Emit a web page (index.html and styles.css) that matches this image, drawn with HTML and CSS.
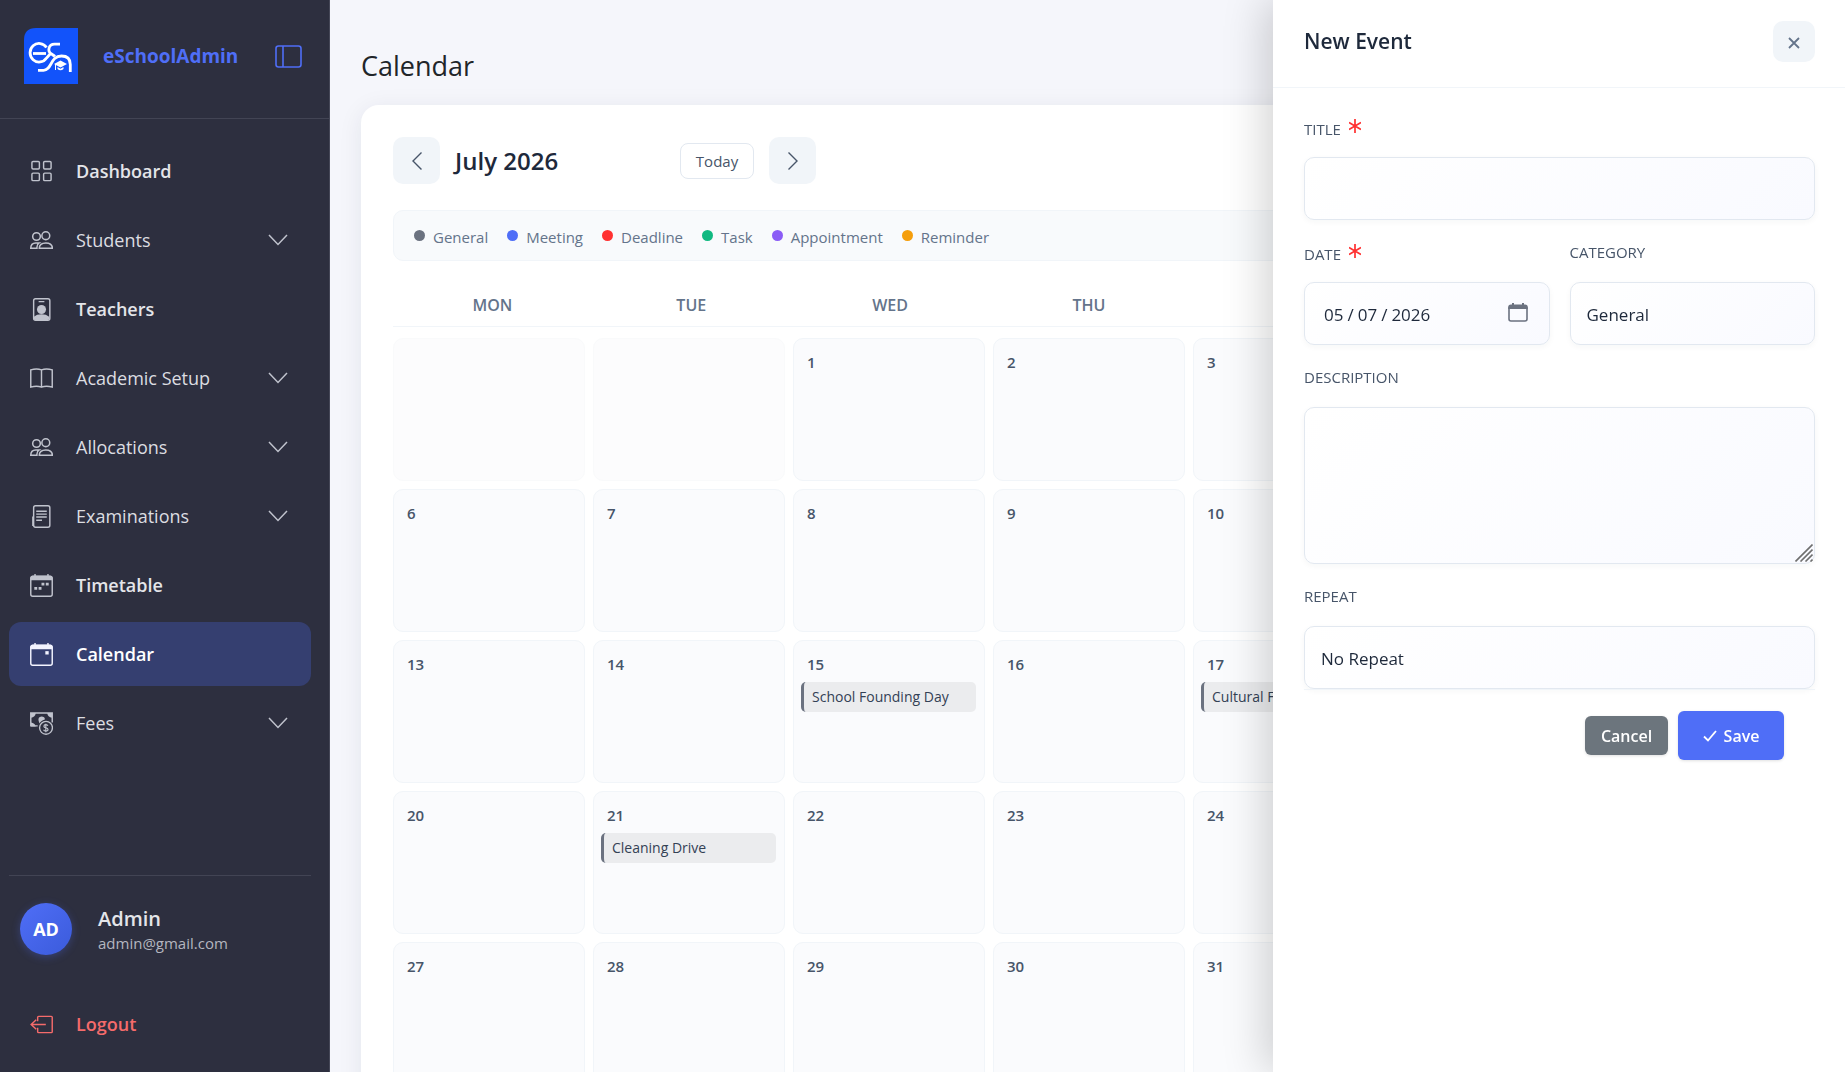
FILE: index.html
```html
<!DOCTYPE html>
<html lang="en">
<head>
<meta charset="utf-8">
<meta name="viewport" content="width=device-width, initial-scale=1">
<title>Calendar - eSchoolAdmin</title>
<link rel="stylesheet" href="styles.css">
</head>
<body>
<svg class="sprite" aria-hidden="true">
  <symbol id="i-chevron" viewBox="0 0 20 12"><path d="M1 1l9 9.500 9-9.500" fill="none" stroke="currentColor" stroke-width="1.500"/></symbol>
  <symbol id="i-people" viewBox="0 0 24 24"><g fill="none" stroke="currentColor" stroke-width="1.600"><circle cx="6.800" cy="7.800" r="4"/><circle cx="16.500" cy="7" r="4.100"/><path d="M9.700 20c0-4 2.500-5.500 6.800-5.500s6.800 1.500 6.800 5.500zM9.500 14.500c-1.500 1-2.500 3-2.300 5.500H.8c0-3.500 2-5.500 5.200-5.500z"/></g></symbol>
  <symbol id="i-calendar" viewBox="0 0 24 24"><rect x=".8" y="2.500" width="22.400" height="20.700" rx="2" fill="none" stroke="currentColor" stroke-width="1.500"/><path d="M.500 6.500V4q0-2.500 2.500-2.500h1.500V0H6v1.500h12V0h1.500v1.500H21q2.500 0 2.500 2.500v2.500z" fill="currentColor"/></symbol>
</svg>
<div class="app">
  <aside class="sidebar">
    <div class="brand">
      <svg class="logo" viewBox="0 0 54 56" aria-hidden="true">
        <path d="M12 0H54V56H0V12Q0 0 12 0z" fill="#1253fa"/>
        <g fill="none" stroke="#fff" stroke-width="2.800">
          <path d="M9 25.500H22"/>
          <path d="M22.500 19.500A9 9.300 0 1 0 22.500 30L27 25"/>
          <path d="M36 16.200h-5.500c-6 0-7.500 7-3 9.800 1.500 1 2.500 1.500 3.500 2.500"/>
          <path d="M14 42.300h5.500c8.500 0 6.500-14.300 18-14.300 6.500 0 8.800 4 8.800 8.500V44"/>
        </g>
        <path d="M30 36l6.500-3.500L43 36l-6.500 3.500zM33.500 39l3 1.800 3-1.800v2q-3 2.500-6 0z" fill="#fff"/>
        <path d="M31.500 36v6" stroke="#fff"/>
      </svg>
      <span class="brand-name">eSchoolAdmin</span>
      <button class="toggle" type="button" aria-label="Collapse sidebar">
        <svg viewBox="0 0 27 23"><path d="M3.500 1h20q2.500 0 2.500 2.500v16q0 2.500-2.500 2.500h-20Q1 22 1 19.500v-16Q1 1 3.500 1zM8 1v21" fill="none" stroke="currentColor" stroke-width="1.600"/></svg>
      </button>
    </div>
    <nav class="nav">
      <a class="item strong" href="#"><svg class="icon" viewBox="0 0 24 24"><g fill="none" stroke="currentColor" stroke-width="1.500"><rect x="2" y="1.500" width="7.800" height="7.800" rx="1.200"/><rect x="14.200" y="1.500" width="7.800" height="7.800" rx="1.200"/><rect x="2" y="13.700" width="7.800" height="7.800" rx="1.200"/><rect x="14.200" y="13.700" width="7.800" height="7.800" rx="1.200"/></g></svg><span>Dashboard</span></a>
      <a class="item" href="#"><svg class="icon"><use href="#i-people"/></svg><span>Students</span><svg class="chev"><use href="#i-chevron"/></svg></a>
      <a class="item strong" href="#"><svg class="icon" viewBox="0 0 24 24"><rect x="3.800" y=".8" width="16.900" height="22.400" rx="2" fill="none" stroke="currentColor" stroke-width="1.500"/><path d="M9 3h6v1.400H9zM4 21v-1.500q3-2.500 8-2.500t8 2.500V21q0 2-2 2H6q-2 0-2-2z" fill="currentColor"/><circle cx="12" cy="12" r="4.700" fill="currentColor"/></svg><span>Teachers</span></a>
      <a class="item" href="#"><svg class="icon" viewBox="0 0 24 24"><path d="M12 3Q7 1 .800 3v18q6.200-2 11.200 0 5-2 11.200 0V3Q17 1 12 3zV21" fill="none" stroke="currentColor" stroke-width="1.500"/></svg><span>Academic Setup</span><svg class="chev"><use href="#i-chevron"/></svg></a>
      <a class="item" href="#"><svg class="icon"><use href="#i-people"/></svg><span>Allocations</span><svg class="chev"><use href="#i-chevron"/></svg></a>
      <a class="item" href="#"><svg class="icon" viewBox="0 0 24 24"><rect x="3.800" y=".8" width="16.900" height="22.400" rx="2" fill="none" stroke="currentColor" stroke-width="1.500"/><path d="M3 12v10M6.500 6.500h11M6.500 9.500h11M6.500 12.500h11M6.500 16h6" fill="none" stroke="currentColor" stroke-width="1.500"/></svg><span>Examinations</span><svg class="chev"><use href="#i-chevron"/></svg></a>
      <a class="item strong" href="#"><svg class="icon" viewBox="0 0 24 24"><use href="#i-calendar"/><path d="M12 9h3v3h-3zM16.500 9h3v3h-3zM4.500 13.500h3v3h-3zM9 13.500h3v3H9z" fill="currentColor"/></svg><span>Timetable</span></a>
      <a class="item strong active" href="#" aria-current="page"><svg class="icon" viewBox="0 0 24 24"><use href="#i-calendar"/><path d="M16 8.500h3.500V12H16z" fill="currentColor"/></svg><span>Calendar</span></a>
      <a class="item" href="#"><svg class="icon" viewBox="0 0 24 24"><path d="M8 14.500H.800V1h22.400v10" fill="none" stroke="currentColor" stroke-width="1.500"/><path d="M1 1h5q-.5 4.500-5 5zM23 1h-5q.5 4.500 5 5zM1 15v-4q4 .5 5 4zM9 9.500Q8 5 12 4.700q3.500 0 3.500 3Q11 9 10 12z" fill="currentColor"/><circle cx="16.700" cy="16.500" r="6.700" fill="none" stroke="currentColor" stroke-width="1.400"/><path d="M18.700 14.400q-.5-1.200-2.200-1.200-2 0-2 1.600 0 1.300 2 1.600 2.300.4 2.300 1.800 0 1.600-2.300 1.600-1.900 0-2.300-1.300M16.500 12.200v9" fill="none" stroke="currentColor" stroke-width="1.200"/></svg><span>Fees</span><svg class="chev"><use href="#i-chevron"/></svg></a>
    </nav>
    <div class="account">
      <div class="profile">
        <span class="avatar">AD</span>
        <div class="who"><strong>Admin</strong><span>admin@gmail.com</span></div>
      </div>
      <a class="item strong logout" href="#"><svg class="icon" viewBox="0 0 24 24"><path d="M8 8.500V4.500Q8 3.500 9 3.500h13.200q1 0 1 1v15q0 1-1 1H9q-1 0-1-1V15.500M16.500 12H1.500M6.500 7L1.200 12l5.300 5" fill="none" stroke="currentColor" stroke-width="1.500"/></svg><span>Logout</span></a>
    </div>
  </aside>

  <main class="main">
    <h1>Calendar</h1>
    <section class="card">
      <div class="toolbar">
        <button class="step" type="button" aria-label="Previous month"><svg viewBox="0 0 12 20"><path d="M10.500 1.500L2 10l8.500 8.500" fill="none" stroke="currentColor" stroke-width="1.400"/></svg></button>
        <h2>July 2026</h2>
        <button class="today" type="button">Today</button>
        <button class="step" type="button" aria-label="Next month"><svg viewBox="0 0 12 20"><path d="M1.500 1.500L10 10l-8.500 8.500" fill="none" stroke="currentColor" stroke-width="1.400"/></svg></button>
      </div>
      <ul class="legend">
        <li class="general">General</li>
        <li class="meeting">Meeting</li>
        <li class="deadline">Deadline</li>
        <li class="task">Task</li>
        <li class="appointment">Appointment</li>
        <li class="reminder">Reminder</li>
      </ul>
      <div class="weekdays"><span>MON</span><span>TUE</span><span>WED</span><span>THU</span><span>FRI</span><span>SAT</span><span>SUN</span></div>
      <div class="days">
        <div class="day empty"></div><div class="day empty"></div><div class="day">1</div><div class="day">2</div><div class="day">3</div><div class="day">4</div><div class="day">5</div>
        <div class="day">6</div><div class="day">7</div><div class="day">8</div><div class="day">9</div><div class="day">10</div><div class="day">11</div><div class="day">12</div>
        <div class="day">13</div><div class="day">14</div><div class="day">15<div class="event">School Founding Day</div></div><div class="day">16</div><div class="day">17<div class="event">Cultural Fest</div></div><div class="day">18</div><div class="day">19</div>
        <div class="day">20</div><div class="day">21<div class="event">Cleaning Drive</div></div><div class="day">22</div><div class="day">23</div><div class="day">24</div><div class="day">25</div><div class="day">26</div>
        <div class="day">27</div><div class="day">28</div><div class="day">29</div><div class="day">30</div><div class="day">31</div><div class="day empty"></div><div class="day empty"></div>
      </div>
    </section>
  </main>
</div>

<aside class="drawer" role="dialog" aria-labelledby="drawer-title">
  <header class="drawer-head">
    <h2 id="drawer-title">New Event</h2>
    <button class="close" type="button" aria-label="Close"><svg viewBox="0 0 12 12"><path d="M1 1l10 10M11 1L1 11" stroke="currentColor" stroke-width="1.800" fill="none"/></svg></button>
  </header>
  <form class="form">
    <div class="field">
      <label for="title">TITLE <svg class="req" viewBox="0 0 12 14"><path d="M6 0v14M0 3.500l12 7M12 3.500l-12 7" stroke="currentColor" stroke-width="1.700"/></svg></label>
      <input class="control" id="title" type="text" required>
    </div>
    <div class="pair">
      <div class="field">
        <label for="date">DATE <svg class="req" viewBox="0 0 12 14"><path d="M6 0v14M0 3.500l12 7M12 3.500l-12 7" stroke="currentColor" stroke-width="1.700"/></svg></label>
        <div class="wrap">
          <input class="control date" id="date" type="date" value="2026-05-07" required>
          <svg class="picker" viewBox="0 0 20 19"><path d="M1 5h18v11q0 2-2 2H3q-2 0-2-2z" fill="none" stroke="currentColor" stroke-width="1.600"/><path d="M.200 6V4q0-2.500 2.800-2.500h1V0h2v1.500h8V0h2v1.500h1q2.800 0 2.800 2.500v2z" fill="currentColor"/></svg>
        </div>
      </div>
      <div class="field">
        <label for="category">CATEGORY</label>
        <select class="control" id="category"><option>General</option><option>Meeting</option><option>Deadline</option><option>Task</option><option>Appointment</option><option>Reminder</option></select>
      </div>
    </div>
    <div class="field">
      <label for="description">DESCRIPTION</label>
      <div class="wrap">
        <textarea class="control" id="description"></textarea>
        <svg class="grip" viewBox="0 0 18 18"><path d="M.500 17.500l17-17M5.500 17.500l12-12M10.500 17.500l7-7M15.500 17.500l2-2" stroke="currentColor" stroke-width="1.600"/></svg>
      </div>
    </div>
    <div class="field">
      <label for="repeat">REPEAT</label>
      <select class="control" id="repeat"><option>No Repeat</option><option>Daily</option><option>Weekly</option><option>Monthly</option></select>
    </div>
    <footer class="actions">
      <button class="btn cancel" type="button">Cancel</button>
      <button class="btn save" type="submit"><svg viewBox="0 0 14 12"><path d="M1 6.500l4 4L13 1" fill="none" stroke="currentColor" stroke-width="1.800"/></svg>Save</button>
    </footer>
  </form>
</aside>
</body>
</html>
```
FILE: styles.css
```css
* { box-sizing: border-box; }

body {
  margin: 0;
  font-family: "Open Sans", "Noto Sans", sans-serif;
  font-size: 15px;
  color: #212529;
  background: #f5f6fb;
}

button, input, select, textarea { font: inherit; }
button { border: 0; padding: 0; cursor: pointer; }
h1, h2 { margin: 0; }
svg { display: block; flex: none; }
.sprite { position: absolute; width: 0; height: 0; }

.app {
  display: flex;
  height: 100vh;
  overflow: hidden;
}

/* Sidebar */
.sidebar {
  flex: none;
  display: flex;
  flex-direction: column;
  width: 330px;
  background: #2d2f3f;
  border-right: 1px solid #454757;
}

.brand {
  display: flex;
  align-items: center;
  height: 119px;
  padding: 0 27px 6px 24px;
  border-bottom: 1px solid #424454;
}
.logo { width: 54px; height: 56px; }
.brand-name {
  margin-left: 25px;
  font-size: 19px;
  font-weight: 700;
  color: #4f6ef7;
}
.toggle { margin-left: auto; background: none; color: #4f6ef7; }
.toggle svg { width: 27px; height: 23px; }

.nav {
  flex: 1;
  display: flex;
  flex-direction: column;
  gap: 5px;
  padding: 20px 18px 0 9px;
}
.item {
  display: flex;
  align-items: center;
  height: 64px;
  padding: 0 23px 0 21px;
  border-radius: 12px;
  color: #dcdde1;
  font-size: 18px;
  text-decoration: none;
}
.item.strong { font-weight: 600; color: #e4e5e9; }
.item.active { background: #353f70; color: #fff; }
.icon { width: 23px; height: 23px; margin-right: 23px; color: #c0c3cd; }
.active .icon { color: #f3f4ff; }
.chev { width: 20px; height: 12px; margin-left: auto; color: #c0c3cd; }

.account {
  margin: 0 18px 16px 9px;
  border-top: 1px solid #424454;
}
.profile {
  display: flex;
  align-items: center;
  gap: 26px;
  padding: 27px 11px 37px;
}
.avatar {
  display: grid;
  place-items: center;
  width: 52px;
  height: 52px;
  border-radius: 50%;
  background: linear-gradient(135deg, #4f6ef7, #3b5bdb);
  box-shadow: 0 2px 8px rgba(79, 110, 247, .3);
  color: #fff;
  font-size: 18px;
  font-weight: 700;
}
.who { display: flex; flex-direction: column; padding-top: 2px; color: #b4b6bf; line-height: 22px; }
.who strong { font-size: 20px; font-weight: 600; line-height: 26px; color: #e4e5e9; }
.item.logout, .logout .icon { color: #f56b6b; }

/* Calendar */
.main {
  flex: 1;
  min-width: 0;
  padding: 47px 28px 0 31px;
}
h1 { font-size: 27px; font-weight: 400; line-height: 38px; }
.card {
  margin-top: 20px;
  padding: 32px;
  border-radius: 18px;
  background: #fff;
  box-shadow: 0 4px 24px rgba(30, 41, 59, .08);
}
.toolbar { display: flex; align-items: center; }
.step {
  display: grid;
  place-items: center;
  width: 47px;
  height: 47px;
  border-radius: 10px;
  background: #f1f5f9;
  color: #475569;
}
.step svg { width: 12px; height: 20px; }
.toolbar h2 {
  width: 225px;
  margin-left: 15px;
  font-size: 24px;
  font-weight: 600;
  color: #1e293b;
}
.today {
  width: 74px;
  height: 36px;
  margin-right: 15px;
  border: 1px solid #e2e8f0;
  border-radius: 8px;
  background: #fff;
  color: #475569;
}

.legend {
  display: flex;
  align-items: center;
  gap: 19px;
  height: 51px;
  margin: 26px 0 0;
  padding: 2px 20px 0;
  border: 1px solid #f1f5f9;
  border-radius: 10px;
  background: #f8fafc;
  color: #64748b;
  list-style: none;
}
.legend li { display: flex; align-items: center; gap: 8px; }
.legend li::before {
  content: "";
  width: 11px;
  height: 11px;
  margin-bottom: 2px;
  border-radius: 50%;
}
.general::before { background: #6b7280; }
.meeting::before { background: #4f6ef7; }
.deadline::before { background: #ff3131; }
.task::before { background: #10b981; }
.appointment::before { background: #8b5cf6; }
.reminder::before { background: #f59e0b; }

.weekdays, .days {
  display: grid;
  grid-template-columns: repeat(7, minmax(0, 1fr));
}
.weekdays {
  margin-top: 24px;
  padding: 9px 0 10px;
  border-bottom: 1px solid #f1f5f9;
  color: #64748b;
  font-size: 16px;
  font-weight: 600;
  line-height: 22px;
  text-align: center;
}
.days { gap: 8px; margin-top: 11px; }
.day {
  height: 143px;
  padding: 12px 8px 8px 13px;
  border: 1px solid #f1f5f9;
  border-radius: 10px;
  background: #fafbfd;
  color: #475569;
  font-weight: 600;
  line-height: 22px;
}
.day.empty { background: #fcfcfd; border-color: #f9fafb; }
.event {
  height: 30px;
  margin: 7px 0 0 -6px;
  padding: 0 8px;
  border-left: 3px solid #6b7280;
  border-radius: 5px;
  background: #ebecee;
  color: #334155;
  font-size: 14px;
  font-weight: 400;
  line-height: 30px;
  white-space: nowrap;
}

/* New event drawer */
.drawer {
  position: fixed;
  top: 0;
  right: 0;
  bottom: 0;
  width: 572px;
  background: #fff;
  box-shadow: -8px 0 40px rgba(0, 0, 0, .18);
  overflow: hidden;
}
.drawer-head {
  display: flex;
  align-items: center;
  justify-content: space-between;
  height: 88px;
  padding: 0 30px 5px 31px;
  border-bottom: 1px solid #f1f5f9;
}
.drawer-head h2 { font-size: 21px; font-weight: 600; color: #1e293b; }
.close {
  display: grid;
  place-items: center;
  width: 42px;
  height: 41px;
  padding-top: 4px;
  border-radius: 10px;
  background: #f1f5f9;
  color: #64748b;
}
.close svg { width: 12px; height: 12px; }

.form {
  display: flex;
  flex-direction: column;
  gap: 19px;
  padding: 26px 30px 0 31px;
}
.field { display: flex; flex-direction: column; }
.field label {
  display: flex;
  align-items: flex-start;
  gap: 8px;
  height: 43px;
  color: #475569;
  font-size: 15px;
  line-height: 27px;
}
.field:has(.req) label { height: 43px; line-height: 30px; }
.req { width: 12px; height: 14px; margin-top: 5px; color: #ff3131; }
.wrap { position: relative; display: flex; }
.control {
  width: 100%;
  height: 63px;
  margin: 0;
  padding: 2px 16px 0;
  border: 1px solid #e2e8f0;
  border-radius: 10px;
  background: linear-gradient(135deg, #fff, #f9faff);
  box-shadow: 0 2px 6px rgba(30, 41, 59, .04);
  color: #1e293b;
  font-size: 17px;
  outline: none;
  appearance: none;
}
textarea.control { height: 157px; padding: 12px 16px; resize: none; }
.date { padding-left: 18px; }
.date::-webkit-datetime-edit-text { padding: 0 3px; }
.date::-webkit-calendar-picker-indicator { opacity: 0; }
.picker { position: absolute; right: 22px; top: 21px; width: 20px; height: 19px; color: #6b7280; pointer-events: none; }
.grip { position: absolute; right: 2px; bottom: 2px; width: 18px; height: 18px; color: #6f6f6f; pointer-events: none; }
.pair { display: grid; grid-template-columns: 1fr 1fr; gap: 20px; }

.actions {
  display: flex;
  align-items: center;
  justify-content: flex-end;
  gap: 10px;
  margin-top: -19px;
  padding: 21px 31px;
  border-top: 1px solid #f1f5f9;
}
.btn {
  display: flex;
  align-items: center;
  justify-content: center;
  gap: 7px;
  border-radius: 6px;
  color: #fff;
  font-size: 16px;
  font-weight: 600;
  box-shadow: 0 1px 3px rgba(0, 0, 0, .12);
}
.cancel { width: 83px; height: 39px; background: #6c757d; }
.save { width: 106px; height: 49px; background: #4f6ef7; }
.save svg { width: 14px; height: 12px; }
```
